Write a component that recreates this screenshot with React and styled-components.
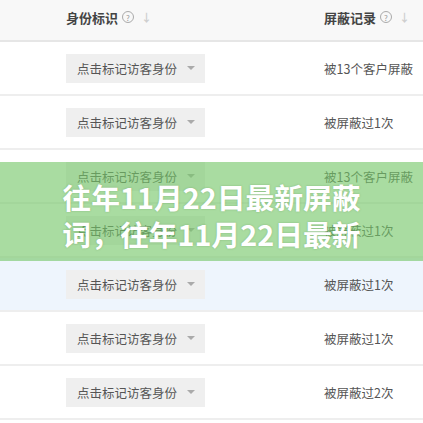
import React from "react";
import styled, { createGlobalStyle } from "styled-components";

const GlobalStyle = createGlobalStyle`
  html, body {
    margin: 0;
    padding: 0;
    background: #fff;
  }
  body {
    font-family: "Noto Sans CJK SC", "Noto Sans", sans-serif;
  }
`;

const Page = styled.main`
  position: relative;
  width: 423px;
  height: 423px;
  overflow: hidden;
  background: #fff;
`;

const Row = styled.div`
  display: grid;
  grid-template-columns: 258px 1fr;
  align-items: center;
  height: 52px;
  padding-left: 66px;
  border-bottom: 2px solid #eeeeee;
  background: ${(p) => (p.$active ? "#eef5fd" : "#fff")};
`;

const HeaderRow = styled(Row)`
  height: 40px;
  background: #f8f8f8;
  border-bottom: 2px solid #e6e6e6;
  align-items: start;
`;

const HeadCell = styled.div`
  display: flex;
  align-items: center;
  gap: 3px;
  height: 34px;
  font-size: 13px;
  font-weight: bold;
  color: #444;
`;

const Help = styled.span`
  display: inline-flex;
  align-items: center;
  justify-content: center;
  width: 10px;
  height: 10px;
  border: 1px solid #aaa;
  border-radius: 50%;
  font-size: 8px;
  font-weight: normal;
  color: #999;
  margin-left: 1px;
`;

const SortArrow = styled.span`
  font-size: 11px;
  color: #cfcfcf;
  margin-left: 4px;
  font-weight: bold;
`;

const Select = styled.div`
  display: flex;
  align-items: center;
  justify-content: space-between;
  box-sizing: border-box;
  width: 139px;
  height: 29px;
  padding: 0 10px 0 11px;
  background: #efefef;
  font-size: 12.5px;
  color: #555;
`;

const Caret = styled.span`
  width: 0;
  height: 0;
  border-left: 4px solid transparent;
  border-right: 4px solid transparent;
  border-top: 4px solid #aaa;
`;

const Record = styled.div`
  font-size: 12.5px;
  color: #555;
`;

const Banner = styled.div`
  position: absolute;
  left: 0;
  right: 0;
  top: 162px;
  height: 99px;
  box-sizing: border-box;
  padding-top: 6px;
  display: flex;
  align-items: center;
  justify-content: center;
  background: rgba(116, 198, 104, 0.62);
`;

const Title = styled.h1`
  margin: 0;
  font-size: 28.8px;
  line-height: 37px;
  font-weight: bold;
  color: #fff;
  text-align: left;
  white-space: nowrap;
  text-shadow: 0 0 2px rgba(60, 110, 50, 0.35);
  font-family: "Noto Sans CJK SC", sans-serif;
`;

const TitleLine = styled.span`
  display: block;
`;

const rows = [
  "被13个客户屏蔽",
  "被屏蔽过1次",
  "被13个客户屏蔽",
  "被屏蔽过1次",
  "被屏蔽过1次",
  "被屏蔽过1次",
  "被屏蔽过2次",
];

const App = () => {
  return (
    <Page>
      <GlobalStyle />
      <HeaderRow>
        <HeadCell>
          身份标识<Help>?</Help>
          <SortArrow>↓</SortArrow>
        </HeadCell>
        <HeadCell>
          屏蔽记录<Help>?</Help>
          <SortArrow>↓</SortArrow>
        </HeadCell>
      </HeaderRow>
      {rows.map((r, i) => (
        <Row key={i} $active={i === 4}>
          <Select>
            点击标记访客身份
            <Caret />
          </Select>
          <Record>{r}</Record>
        </Row>
      ))}
      <Banner>
        <Title>
          <TitleLine>往年11月22日最新屏蔽</TitleLine>
          <TitleLine>词，往年11月22日最新</TitleLine>
        </Title>
      </Banner>
    </Page>
  );
};

export default App;
